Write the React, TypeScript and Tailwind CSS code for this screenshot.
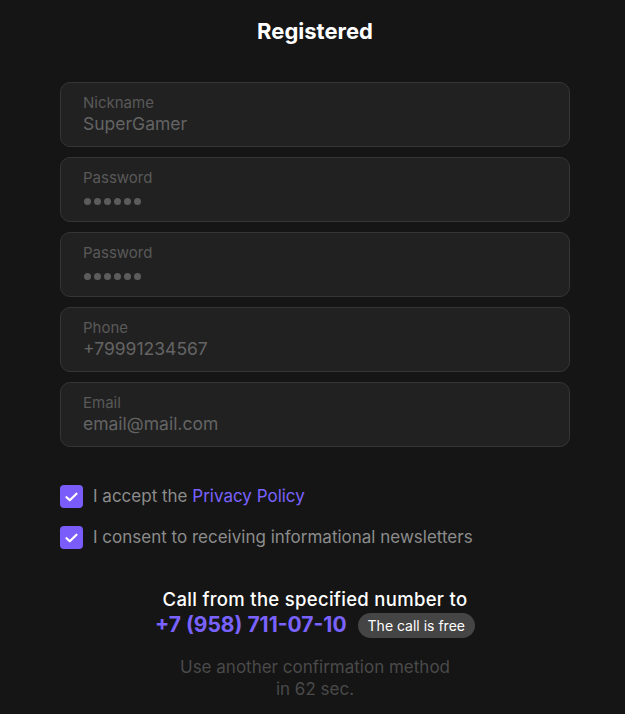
const fields = [
  { label: "Nickname", value: "SuperGamer" },
  { label: "Password", value: "", secret: true },
  { label: "Password", value: "", secret: true },
  { label: "Phone", value: "+79991234567" },
  { label: "Email", value: "email@mail.com" },
];

function Check() {
  return (
    <span className="flex h-[23px] w-[23px] shrink-0 items-center justify-center rounded-[4px] bg-[#7a5cfa]">
      <svg width="13" height="10" viewBox="0 0 13 10" fill="none">
        <path d="M1.5 5.2L4.8 8.3L11.5 1.7" stroke="white" strokeWidth="2.2" strokeLinecap="round" strokeLinejoin="round" />
      </svg>
    </span>
  );
}

function Dots() {
  return (
    <span className="mt-[3px] flex h-[22px] items-center gap-[3px] pl-[1px]">
      {[0, 1, 2, 3, 4, 5].map((d) => (
        <span key={d} className="h-[7px] w-[7px] rounded-full bg-[#5c5c5c]" />
      ))}
    </span>
  );
}

export default function App() {
  return (
    <div className="min-h-[714px] bg-[#151515] font-['Inter',sans-serif]">
      <div className="ml-[60px] flex w-[510px] flex-col pt-[18px]">
        <h1 className="text-center text-[22px] font-bold leading-[26px] text-white">Registered</h1>

        <div className="mt-[38px] flex flex-col gap-[10px]">
          {fields.map((f, i) => (
            <div key={i} className="flex h-[65px] flex-col rounded-[10px] border border-[#353535] bg-[#212121] px-[22px] pt-[11px]">
              <span className="text-[15px] leading-[18px] text-[#595959]">{f.label}</span>
              {f.secret ? (
                <Dots />
              ) : (
                <span className="mt-[1px] text-[17.5px] leading-[22px] text-[#646464]">{f.value}</span>
              )}
            </div>
          ))}
        </div>

        <div className="mt-[38px] flex flex-col gap-[18px]">
          <label className="flex items-center gap-[10px] text-[17px] leading-[23px] text-[#8c8c8c]">
            <Check />
            <span>
              I accept the <span className="text-[#7a62ff]">Privacy Policy</span>
            </span>
          </label>
          <label className="flex items-center gap-[10px] text-[17px] leading-[23px] text-[#8c8c8c]">
            <Check />
            <span>I consent to receiving informational newsletters</span>
          </label>
        </div>

        <div className="mt-[39px] flex flex-col items-center">
          <p className="text-[18.5px] font-medium leading-[22px] tracking-[0.3px] text-white">Call from the specified number to</p>
          <div className="mt-[1px] flex items-center gap-[11px]">
            <span className="text-[21px] font-bold leading-[28px] text-[#7a62ff]">+7 (958) 711-07-10</span>
            <span className="rounded-full bg-[#454545] px-[10px] py-[3px] text-[14px] leading-[19px] text-white">The call is free</span>
          </div>
          <p className="mt-[17px] text-center text-[17px] leading-[22px] text-[#4a4a4a]">
            Use another confirmation method
            <br />
            in 62 sec.
          </p>
        </div>
      </div>
    </div>
  );
}
